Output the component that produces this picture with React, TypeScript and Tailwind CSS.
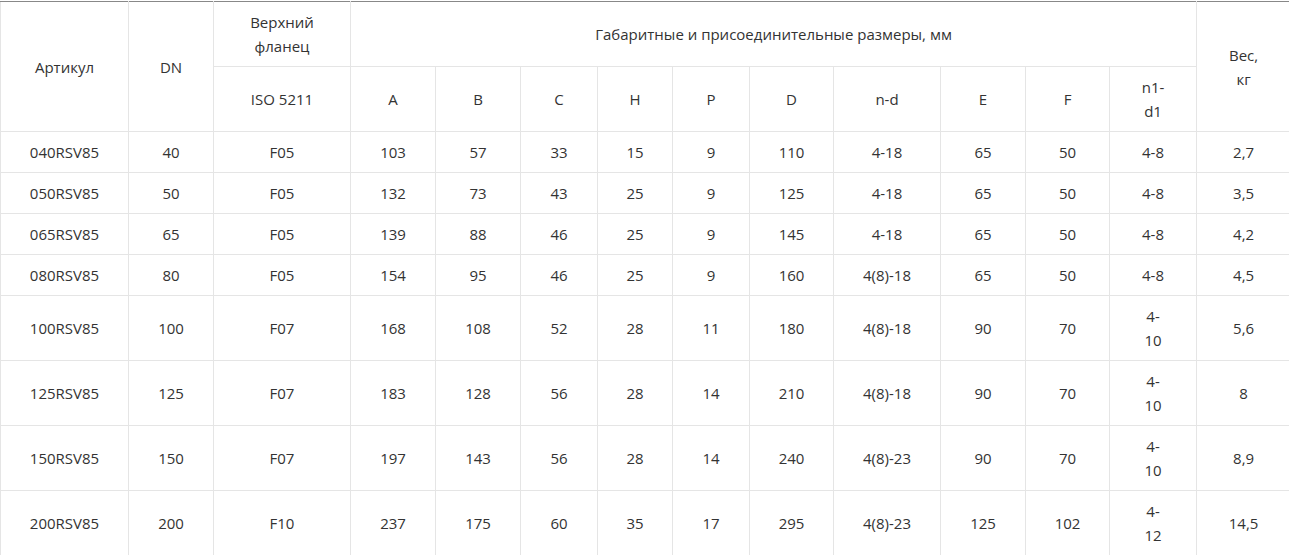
const rows = [
  ["040RSV85", "40", "F05", "103", "57", "33", "15", "9", "110", "4-18", "65", "50", "4-8", "2,7"],
  ["050RSV85", "50", "F05", "132", "73", "43", "25", "9", "125", "4-18", "65", "50", "4-8", "3,5"],
  ["065RSV85", "65", "F05", "139", "88", "46", "25", "9", "145", "4-18", "65", "50", "4-8", "4,2"],
  ["080RSV85", "80", "F05", "154", "95", "46", "25", "9", "160", "4(8)-18", "65", "50", "4-8", "4,5"],
  ["100RSV85", "100", "F07", "168", "108", "52", "28", "11", "180", "4(8)-18", "90", "70", "4-10", "5,6"],
  ["125RSV85", "125", "F07", "183", "128", "56", "28", "14", "210", "4(8)-18", "90", "70", "4-10", "8"],
  ["150RSV85", "150", "F07", "197", "143", "56", "28", "14", "240", "4(8)-23", "90", "70", "4-10", "8,9"],
  ["200RSV85", "200", "F10", "237", "175", "60", "35", "17", "295", "4(8)-23", "125", "102", "4-12", "14,5"],
]

const widths = [128, 85, 137, 85, 85, 77, 75, 77, 84, 107, 85, 84, 87, 94]

// per-column horizontal padding so wrapping matches the original
const pad = [
  "px-1", "px-2", "px-[30px]", "px-2", "px-2", "px-2", "px-2", "px-2", "px-2", "px-2", "px-2", "px-2", "px-[28px]", "px-[26px]",
]

const cell = "border border-[#e5e5e5] py-2 text-center align-middle font-normal"

export default function App() {
  return (
    <div className="w-[1289px] h-[555px] overflow-hidden bg-white pt-px" style={{ fontFamily: '"Open Sans", "Noto Sans", sans-serif' }}>
      <table className="table-fixed border-collapse w-[1290px] text-[15px] leading-6 text-[#333] border-t border-t-[#888]">
        <colgroup>
          {widths.map((w, i) => (
            <col key={i} style={{ width: w }} />
          ))}
        </colgroup>
        <thead>
          <tr>
            <th rowSpan={2} className={`${cell} px-1 border-t-[#888]`}>Артикул</th>
            <th rowSpan={2} className={`${cell} px-2 border-t-[#888]`}>DN</th>
            <th className={`${cell} px-[30px] border-t-[#888]`}>Верхний фланец</th>
            <th colSpan={10} className={`${cell} px-2 border-t-[#888]`}>
              Габаритные и присоединительные размеры, мм
            </th>
            <th rowSpan={2} className={`${cell} px-[26px] border-t-[#888]`}>Вес, кг</th>
          </tr>
          <tr>
            <th className={`${cell} px-[30px]`}>ISO 5211</th>
            <th className={`${cell} px-2`}>A</th>
            <th className={`${cell} px-2`}>B</th>
            <th className={`${cell} px-2`}>C</th>
            <th className={`${cell} px-2`}>H</th>
            <th className={`${cell} px-2`}>P</th>
            <th className={`${cell} px-2`}>D</th>
            <th className={`${cell} px-2`}>n-d</th>
            <th className={`${cell} px-2`}>E</th>
            <th className={`${cell} px-2`}>F</th>
            <th className={`${cell} px-[28px]`}>n1-d1</th>
          </tr>
        </thead>
        <tbody>
          {rows.map((r) => (
            <tr key={r[0]}>
              {r.map((v, i) => (
                <td key={i} className={`${cell} ${pad[i]}`}>
                  {v}
                </td>
              ))}
            </tr>
          ))}
        </tbody>
      </table>
    </div>
  )
}
